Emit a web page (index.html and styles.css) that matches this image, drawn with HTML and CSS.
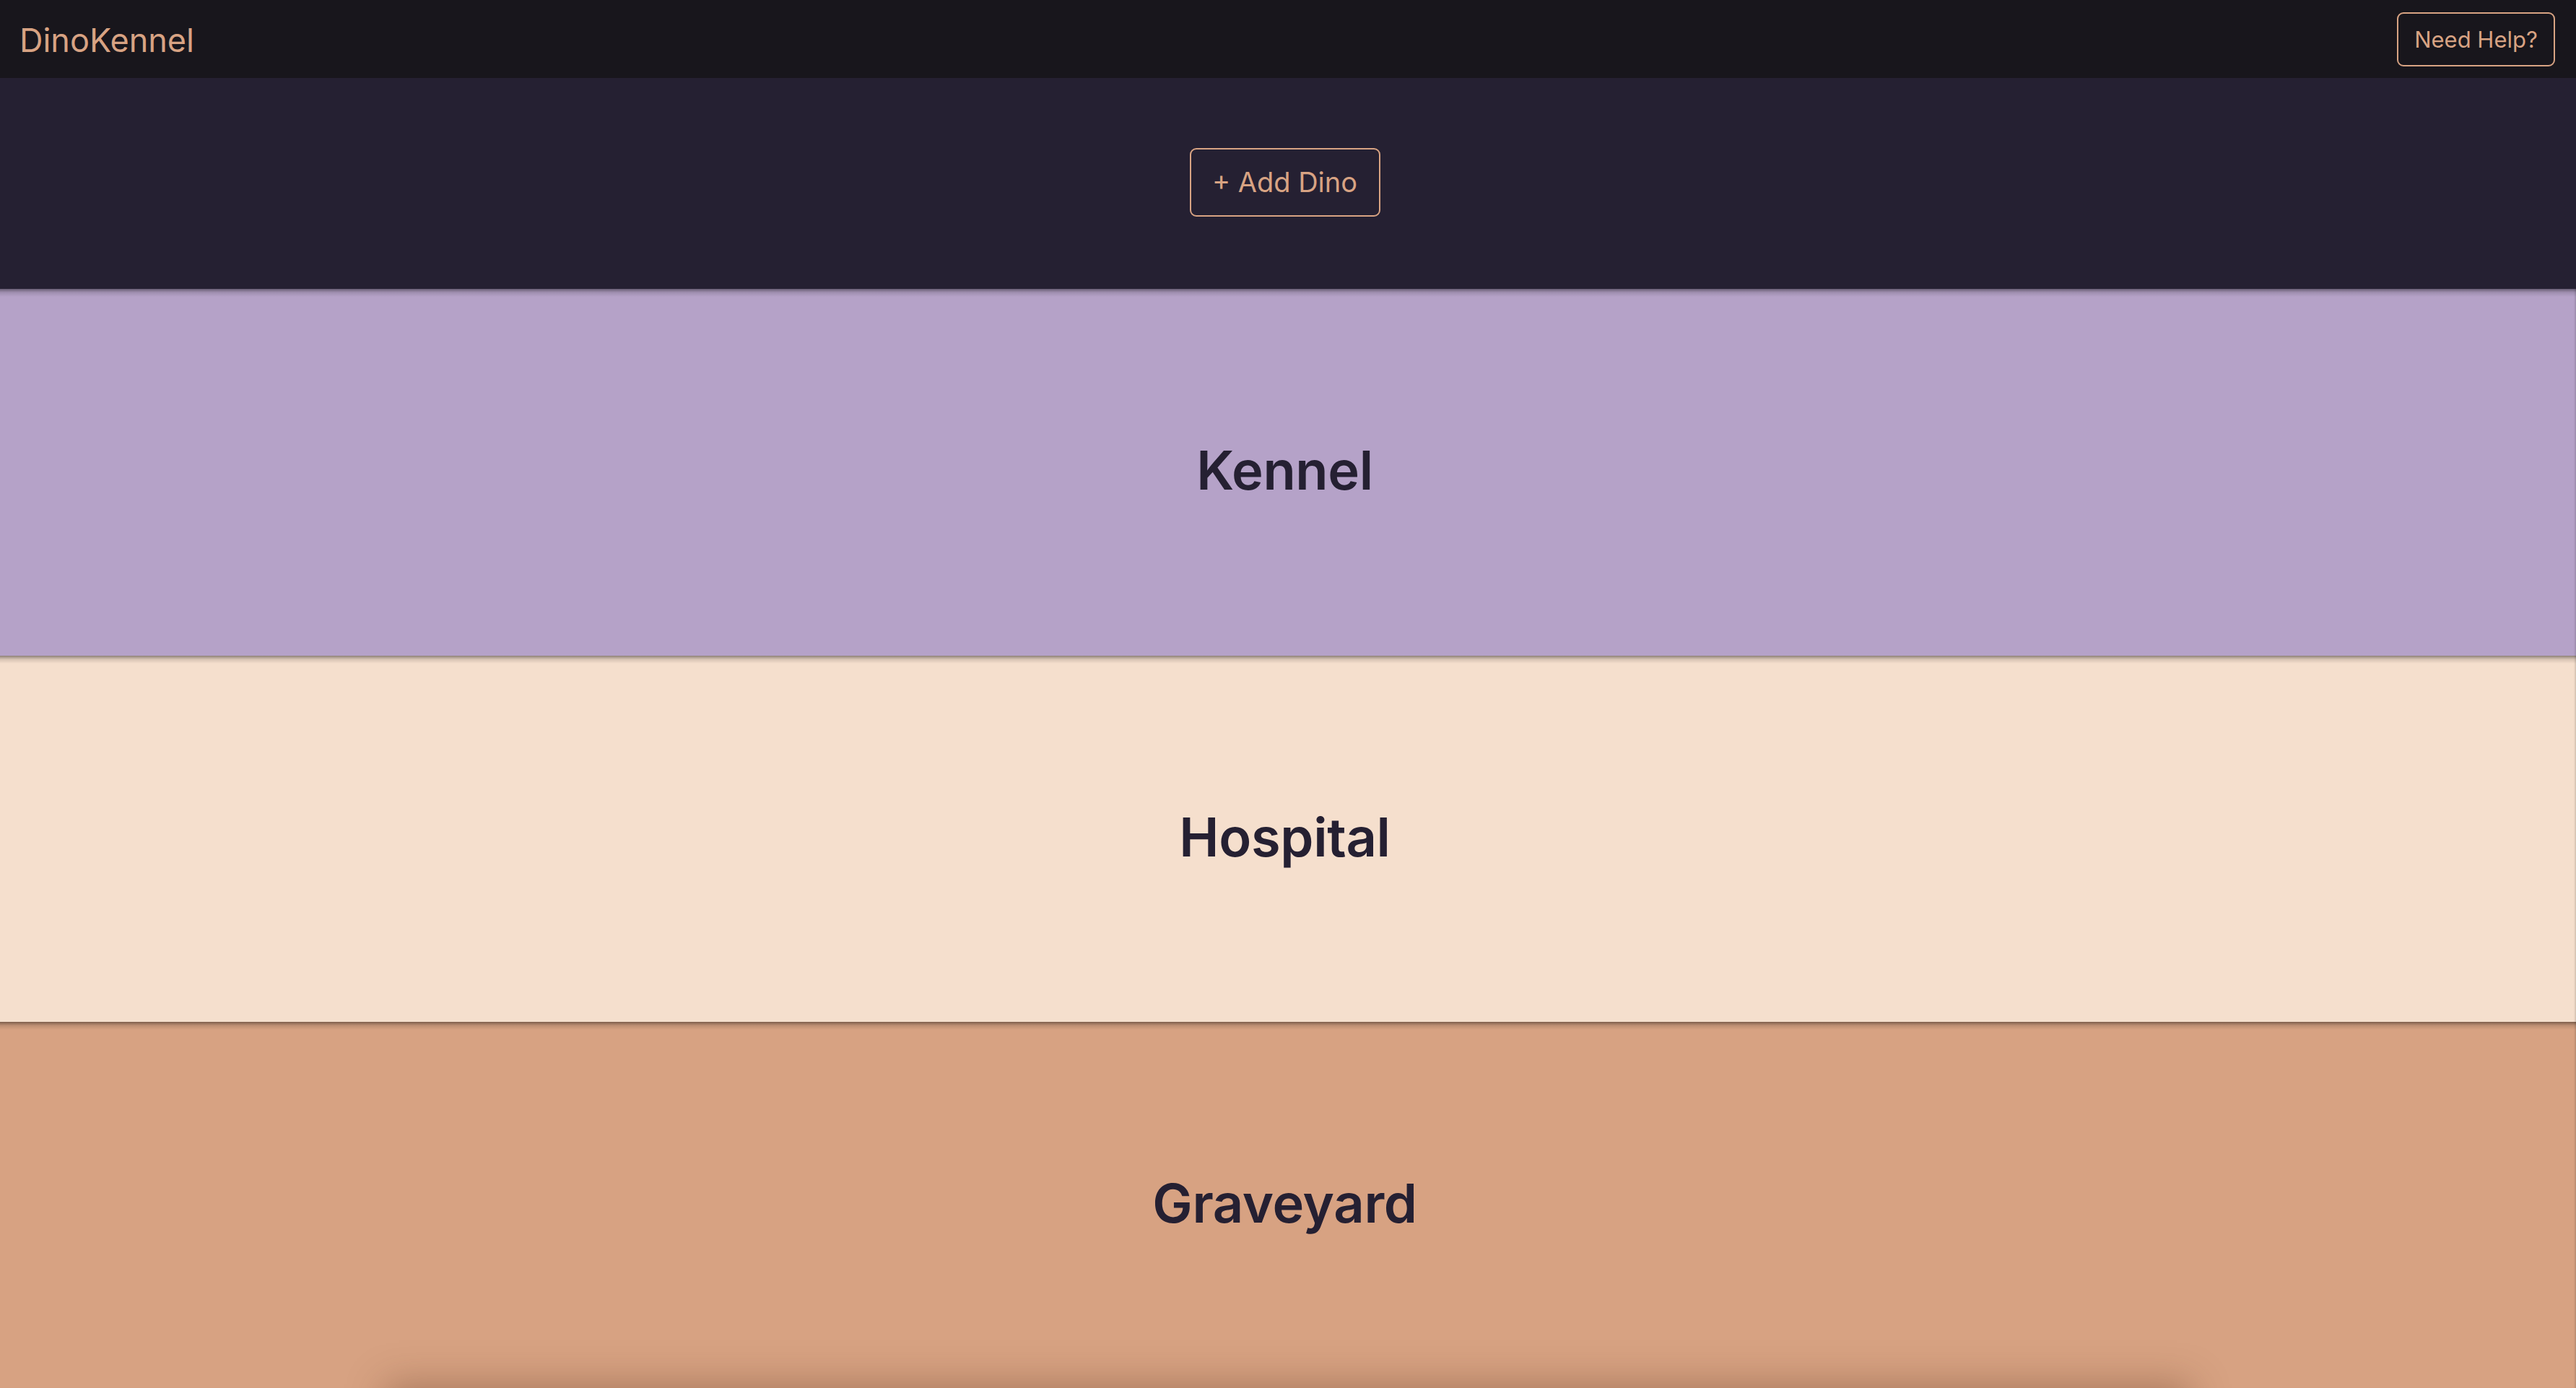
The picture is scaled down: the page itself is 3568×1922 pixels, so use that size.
FILE: index.html
```html
<!DOCTYPE html>
<html lang="en">
<head>
<meta charset="utf-8">
<title>DinoKennel</title>
<link rel="stylesheet" href="styles.css">
</head>
<body>
<nav class="navbar">
  <span class="brand">DinoKennel</span>
  <button class="btn btn-help">Need Help?</button>
</nav>
<header class="toolbar">
  <button class="btn btn-add">+ Add Dino</button>
</header>
<main>
  <section class="zone zone-kennel"><h2>Kennel</h2></section>
  <section class="zone zone-hospital"><h2>Hospital</h2></section>
  <section class="zone zone-graveyard"><h2>Graveyard</h2></section>
  <div class="below-card"></div>
</main>
</body>
</html>
```
FILE: styles.css
```css
html, body {
  margin: 0;
  padding: 0;
}
body {
  font-family: Inter, "Noto Sans", "Liberation Sans", sans-serif;
  background: #252032;
  overflow: hidden;
}
.navbar {
  height: 108px;
  box-sizing: border-box;
  background: #18161c;
  display: flex;
  align-items: center;
  justify-content: space-between;
  padding: 0 29px 0 27px;
}
.brand {
  color: #d8a383;
  font-size: 45px;
  line-height: 1;
  margin-top: 2px;
}
.btn {
  font-family: inherit;
  background: transparent;
  color: #d8a383;
  border: 2px solid #d8a383;
  border-radius: 9px;
  cursor: pointer;
}
.btn-help {
  width: 219px;
  height: 75px;
  font-size: 31px;
  padding: 0;
}
.toolbar {
  height: 292px;
  box-sizing: border-box;
  padding-right: 9px;
  display: flex;
  align-items: center;
  justify-content: center;
  background: #252032;
}
.btn-add {
  width: 264px;
  height: 95px;
  font-size: 38px;
  padding: 0;
  margin-top: -4px;
}
.zone {
  height: 507px;
  box-sizing: border-box;
  padding-right: 9px;
  padding-bottom: 6px;
  display: flex;
  align-items: center;
  justify-content: center;
  background-image: linear-gradient(to bottom, rgba(0, 0, 0, 0.42), rgba(0, 0, 0, 0.12) 5px, rgba(0, 0, 0, 0) 11px);
  box-shadow: inset -3px 0 3px -2px rgba(0, 0, 0, 0.2);
}
.zone h2 {
  margin: 0;
  font-size: 74px;
  font-weight: 600;
  color: #252032;
  letter-spacing: -0.3px;
}
.zone-kennel {
  background-color: #b5a2c8;
  height: 508px;
}
.zone-hospital {
  background-color: #f5dfcd;
}
.zone-graveyard {
  background-color: #d7a282;
}
.below-card {
  width: 2500px;
  height: 400px;
  margin: 0 auto;
  background: #d7a282;
  box-shadow: 0 -6px 50px rgba(90, 50, 30, 0.35);
}
```
